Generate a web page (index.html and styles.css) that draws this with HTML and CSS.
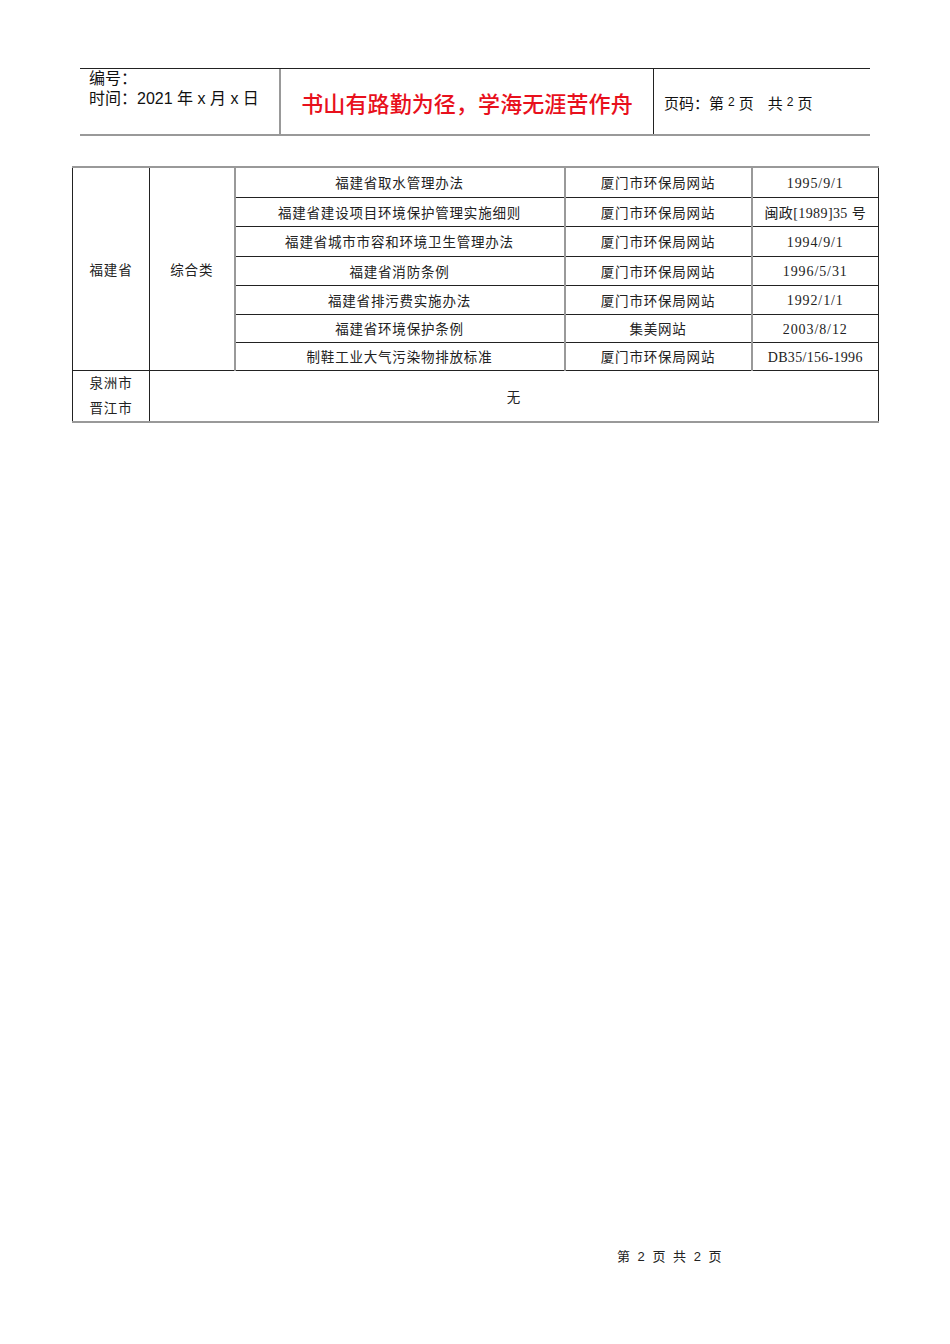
FILE: index.html
```html
<!DOCTYPE html>
<html lang="zh">
<head>
<meta charset="utf-8">
<title>福建省法规</title>
<link rel="stylesheet" href="styles.css">
</head>
<body>
<div class="page">
  <div class="hdr">
    <div class="hcell h1">
      <div>编号：</div>
      <div>时间：2021 年 x 月 x 日</div>
    </div>
    <div class="hcell h2">书山有路勤为径，学海无涯苦作舟</div>
    <div class="hcell h3">页码：第<span class="sm">2</span>页<span class="gap"></span>共<span class="sm">2</span>页</div>
  </div>

  <table class="law">
    <colgroup>
      <col class="c1"><col class="c2"><col class="c3"><col class="c4"><col class="c5">
    </colgroup>
    <tr class="r30">
      <td rowspan="7" class="bl">福建省</td>
      <td rowspan="7" class="gr">综合类</td>
      <td class="gr">福建省取水管理办法</td>
      <td class="gr">厦门市环保局网站</td>
      <td class="num">1995/9/1</td>
    </tr>
    <tr class="r29">
      <td class="gr">福建省建设项目环境保护管理实施细则</td>
      <td class="gr">厦门市环保局网站</td>
      <td class="mix">闽政[1989]35 号</td>
    </tr>
    <tr class="r30">
      <td class="gr">福建省城市市容和环境卫生管理办法</td>
      <td class="gr">厦门市环保局网站</td>
      <td class="num">1994/9/1</td>
    </tr>
    <tr class="r29">
      <td class="gr">福建省消防条例</td>
      <td class="gr">厦门市环保局网站</td>
      <td class="num">1996/5/31</td>
    </tr>
    <tr class="r29">
      <td class="gr">福建省排污费实施办法</td>
      <td class="gr">厦门市环保局网站</td>
      <td class="num">1992/1/1</td>
    </tr>
    <tr class="r28">
      <td class="gr">福建省环境保护条例</td>
      <td class="gr">集美网站</td>
      <td class="num">2003/8/12</td>
    </tr>
    <tr class="r28">
      <td class="gr">制鞋工业大气污染物排放标准</td>
      <td class="gr">厦门市环保局网站</td>
      <td class="num tight">DB35/156-1996</td>
    </tr>
    <tr class="r51 last">
      <td class="two">泉洲市<br>晋江市</td>
      <td colspan="4">无</td>
    </tr>
  </table>

  <div class="foot">第 2 页 共 2 页</div>
</div>
</body>
</html>
```

FILE: styles.css
```css
html, body {
  margin: 0;
  padding: 0;
  background: #fff;
}
.page {
  width: 950px;
  height: 1344px;
  padding-top: 68px;
  box-sizing: border-box;
  color: #111;
}
.hdr {
  display: flex;
  margin-left: 80px;
  width: 790px;
  height: 68px;
  box-sizing: border-box;
  border-top: 1px solid #222;
  border-bottom: 2px solid #999;
  font-family: "Liberation Sans", "Noto Sans CJK SC", sans-serif;
}
.hcell {
  box-sizing: border-box;
}
.h1 {
  width: 201px;
  padding: 0 0 0 9px;
  font-size: 16px;
  line-height: 20px;
  border-right: 2px solid #999;
  color: #111;
}
.h2 {
  width: 373px;
  display: flex;
  align-items: center;
  justify-content: center;
  padding-top: 1px;
  font-family: "Noto Sans CJK SC", sans-serif;
  font-size: 22px;
  font-weight: 500;
  color: #e8101c;
  letter-spacing: 0.1px;
  border-right: 1px solid #222;
}
.h3 {
  flex: 1;
  display: flex;
  align-items: center;
  padding-left: 10px;
  padding-top: 1px;
  font-size: 15px;
  color: #111;
}
.sm {
  font-size: 12px;
  margin: 0 4px;
}
.gap {
  display: inline-block;
  width: 14px;
}
.law {
  margin: 30px 0 0 72px;
  width: 806px;
  border-collapse: collapse;
  table-layout: fixed;
  font-family: "Liberation Serif", "Noto Sans CJK SC", serif;
  font-size: 13.5px;
  letter-spacing: 0.8px;
  color: #222;
  border-top: 2px solid #999;
  border-right: 1px solid #333;
  border-bottom: 2px solid #999;
}
.c1 { width: 77px; }
.c2 { width: 85px; }
.c3 { width: 330px; }
.c4 { width: 187px; }
.c5 { width: 127px; }
.law td {
  border: 1px solid #222;
  text-align: center;
  vertical-align: middle;
  padding: 0;
}
.law td.bl { border-left: 1px solid #222; }
.law td.gr { border-right: 2px solid #999; }
.law td.num {
  font-size: 14px;
  letter-spacing: 0.9px;
  padding-top: 3px;
}
.law td.mix {
  font-size: 14px;
  letter-spacing: 0.4px;
}
.law td.tight {
  letter-spacing: 0.3px;
}
.r30 { height: 30px; }
.r29 { height: 29px; }
.r28 { height: 28px; }
.r51 { height: 51px; }
.last td { border-bottom: 2px solid #999; }
.law td.two {
  line-height: 25px;
  border-right: 1px solid #222;
}
.foot {
  margin-top: 825px;
  padding-left: 617px;
  font-family: "Liberation Sans", "Noto Sans CJK SC", sans-serif;
  font-size: 13px;
  line-height: 18px;
  letter-spacing: 2px;
  color: #222;
}
```
